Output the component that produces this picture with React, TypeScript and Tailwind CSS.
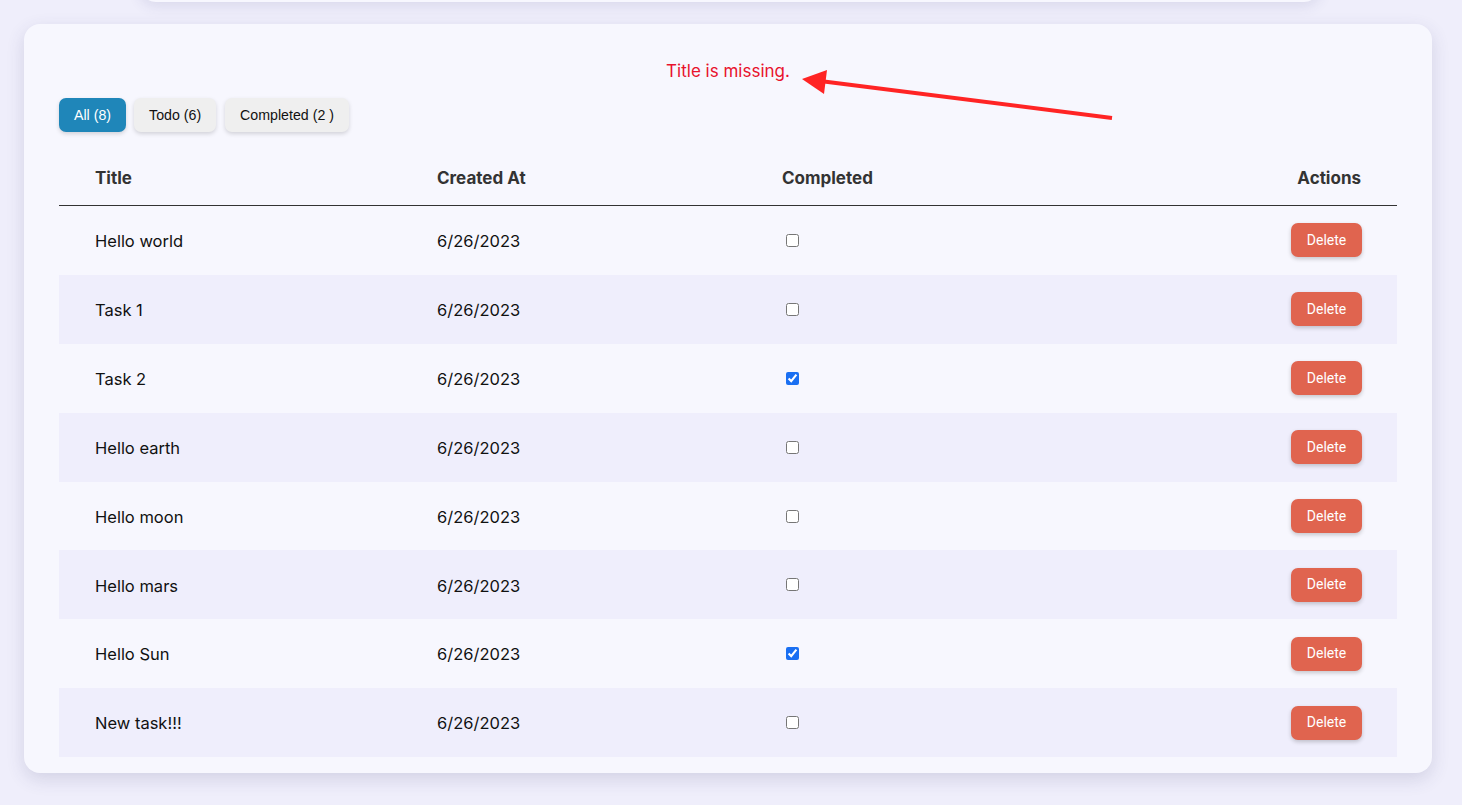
import React from "react";

const rows = [
  { t: "Hello world", c: false },
  { t: "Task 1", c: false },
  { t: "Task 2", c: true },
  { t: "Hello earth", c: false },
  { t: "Hello moon", c: false },
  { t: "Hello mars", c: false },
  { t: "Hello Sun", c: true },
  { t: "New task!!!", c: false },
];

export default function App() {
  return (
    <div className="min-h-[805px] bg-[#efeefb] overflow-hidden relative" style={{ fontFamily: "Inter, 'Noto Sans', sans-serif" }}>
      <div className="ml-[140px] w-[1180px] h-[100px] -mt-[98px] rounded-2xl bg-[#f7f7fe] shadow-[0_4px_14px_rgba(60,60,120,0.12)]" />
      <div className="ml-[24px] mr-[30px] mt-[22px] rounded-2xl bg-[#f7f7fe] shadow-[0_6px_18px_rgba(60,60,110,0.16)] px-[35px] pt-[35px] pb-[16px] relative">
        <div className="text-center text-[17px] leading-[24px] text-[#e8122d]">Title is missing.</div>
        <div className="flex gap-[8px] mt-[15px] text-[14.2px]" style={{ fontFamily: "'Liberation Sans', Arial, sans-serif" }}>
          <button className="h-[34px] px-[15px] pt-[1px] rounded-[7px] bg-[#1f86b9] text-white shadow-[0_2px_4px_rgba(0,0,0,0.15)]">All (8)</button>
          <button className="h-[34px] px-[15px] pt-[1px] rounded-[7px] bg-[#efefef] text-[#111] shadow-[0_2px_4px_rgba(0,0,0,0.15)]">Todo (6)</button>
          <button className="h-[34px] px-[15px] pt-[1px] rounded-[7px] bg-[#efefef] text-[#111] shadow-[0_2px_4px_rgba(0,0,0,0.15)] ml-[1px]">Completed (2 )</button>
        </div>
        <div className="mt-[19px]">
          <div className="grid grid-cols-[342px_345px_1fr_auto] h-[55px] pt-[2px] items-center border-b border-[#333] text-[17px] font-bold text-[#333]">
            <div className="pl-[36px]">Title</div>
            <div className="pl-[36px]">Created At</div>
            <div className="pl-[36px]">Completed</div>
            <div className="pr-[36px] text-right">Actions</div>
          </div>
          {rows.map((r, i) => (
            <div key={i} className={`grid grid-cols-[342px_345px_1fr_auto] h-[68.9px] items-center text-[16.5px] text-[#111] ${i % 2 === 1 ? "bg-[#efeefc]" : ""}`}>
              <div className="pl-[36px] pt-[2px]">{r.t}</div>
              <div className="pl-[36px] pt-[2px]">6/26/2023</div>
              <div className="pl-[36px] flex items-center">
                <input type="checkbox" defaultChecked={r.c} className="ml-[4px] w-[13px] h-[13px] accent-[#1a6ff2]" />
              </div>
              <div className="pr-[35px] flex justify-end">
                <button className="h-[34px] w-[71px] rounded-[7px] bg-[#e0644f] text-white text-[14px] shadow-[0_2px_4px_rgba(0,0,0,0.2)]" style={{ fontFamily: "Roboto, 'Liberation Sans', sans-serif" }}>Delete</button>
              </div>
            </div>
          ))}
        </div>
      </div>
      <svg className="absolute left-0 top-0 pointer-events-none" width="1462" height="805">
        <line x1="1112" y1="118" x2="820" y2="81" stroke="#ff2424" strokeWidth="4" />
        <polygon points="802,79 827,70 824,94" fill="#ff2424" />
      </svg>
    </div>
  );
}
